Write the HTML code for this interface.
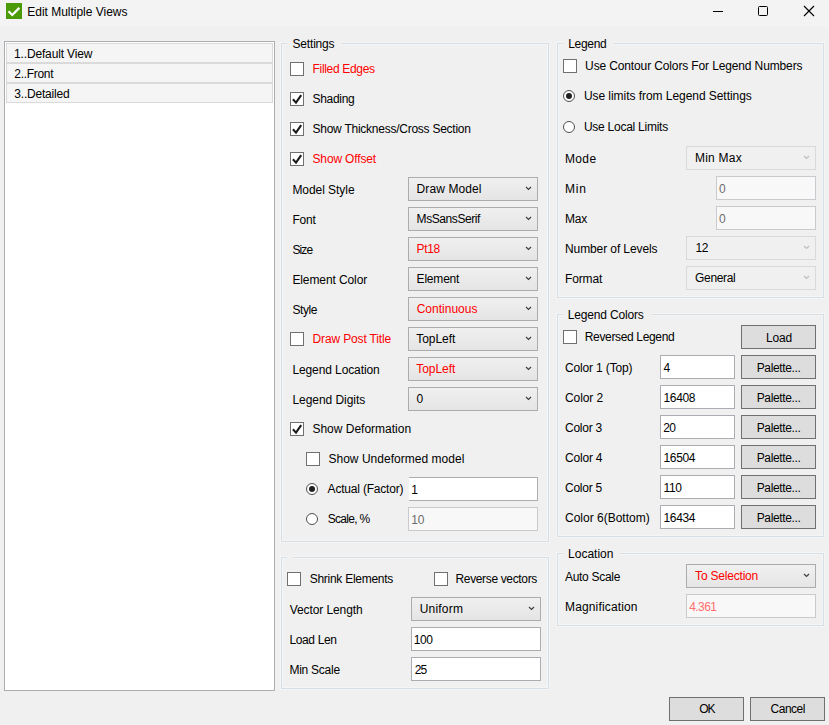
<!DOCTYPE html>
<html><head><meta charset="utf-8"><title>Edit Multiple Views</title>
<style>
html,body{margin:0;padding:0;}
body{width:829px;height:725px;background:#f0f0f0;overflow:hidden;position:relative;
 font-family:"Liberation Sans",sans-serif;font-size:12px;color:#000;}
.a{position:absolute;white-space:nowrap;}
.t{position:absolute;white-space:nowrap;line-height:16px;height:16px;}
.red{color:#ff0000;}
.gray{color:#6d6d6d;}
.lred{color:#ff6d6d;}
.gb{position:absolute;border:1px solid #d5dfe5;box-shadow:0 0 0 1px #f5f5f5, inset 0 0 0 1px #f5f5f5;box-sizing:border-box;}
.gbl{position:absolute;box-sizing:border-box;background:#f0f0f0;height:16px;}
.cb{position:absolute;width:14px;height:14px;box-sizing:border-box;border:1px solid #707070;background:#fff;}
.cb svg{position:absolute;left:0;top:0;}
.rb{position:absolute;width:12px;height:12px;box-sizing:border-box;border:1px solid #505050;background:#fff;border-radius:50%;}
.rb.on::after{content:"";position:absolute;left:2px;top:2px;width:6px;height:6px;border-radius:50%;background:#212121;}
.co{position:absolute;height:24px;box-sizing:border-box;border:1px solid #acacac;background:linear-gradient(#f0f0f0,#e5e5e5);}
.co svg{position:absolute;right:5px;top:8px;}
.co.dis{border-color:#d9d9d9;background:#f0f0f0;}
.tb{position:absolute;height:24px;box-sizing:border-box;border:1px solid #abadb3;background:#fff;}
.tb.dis{background:#f8f8f8;border-color:#c9cace;}
.bt{position:absolute;height:24px;box-sizing:border-box;border:1px solid #707070;background:#dddddd;}
.li{position:absolute;left:6px;width:267px;height:20px;box-sizing:border-box;border:1px solid #dadada;background:#f5f5f5;}
</style></head>
<body>
<div class="a" style="left:0;top:0;width:829px;height:27px;background:#f3f3f3"></div>
<svg class="a" style="left:6px;top:3px" width="16" height="16" viewBox="0 0 16 16"><rect width="16" height="16" fill="#4b9a08"/><path d="M2.5 8.3 L6.3 12 L13.3 4.9" fill="none" stroke="#fff" stroke-width="2.3"/></svg>
<div class="t " style="left:27.3px;top:4px;letter-spacing:-0.020000000000000004px">Edit Multiple Views</div>
<svg class="a" style="left:700px;top:0" width="129" height="24" viewBox="0 0 129 24"><path d="M13 11.5 H23" stroke="#000" stroke-width="1"/><rect x="58.5" y="6.5" width="9" height="9" rx="1" fill="none" stroke="#000" stroke-width="1"/><path d="M104 6 L114 16 M114 6 L104 16" stroke="#000" stroke-width="1.15"/></svg>
<div class="a" style="left:4px;top:41px;width:271px;height:650px;box-sizing:border-box;border:1px solid #abadb3;background:#fff"></div>
<div class="li" style="top:43px"></div>
<div class="t " style="left:14.0px;top:46px;letter-spacing:-0.15px">1..Default View</div>
<div class="li" style="top:63px"></div>
<div class="t " style="left:14.3px;top:66px;letter-spacing:-0.30000000000000004px">2..Front</div>
<div class="li" style="top:83px"></div>
<div class="t " style="left:14.3px;top:86px;letter-spacing:-0.2px">3..Detailed</div>
<div class="gb" style="left:281px;top:43px;width:268px;height:499px"></div>
<div class="gbl" style="left:287px;top:36px;width:55px"></div>
<div class="t " style="left:292.5px;top:36px;letter-spacing:-0.18px">Settings</div>
<div class="cb" style="left:290px;top:62px"></div>
<div class="t red" style="left:312.6px;top:61px;letter-spacing:-0.33px">Filled Edges</div>
<div class="cb" style="left:290px;top:92px"><svg width="12" height="12" viewBox="0 0 12 12"><path d="M1.9 6.3 L5 9.6 L10.2 2.2" fill="none" stroke="#1a1a1a" stroke-width="2.1"/></svg></div>
<div class="t " style="left:312.5px;top:91px;letter-spacing:-0.3px">Shading</div>
<div class="cb" style="left:290px;top:122px"><svg width="12" height="12" viewBox="0 0 12 12"><path d="M1.9 6.3 L5 9.6 L10.2 2.2" fill="none" stroke="#1a1a1a" stroke-width="2.1"/></svg></div>
<div class="t " style="left:312.5px;top:121px;letter-spacing:-0.25px">Show Thickness/Cross Section</div>
<div class="cb" style="left:290px;top:152px"><svg width="12" height="12" viewBox="0 0 12 12"><path d="M1.9 6.3 L5 9.6 L10.2 2.2" fill="none" stroke="#1a1a1a" stroke-width="2.1"/></svg></div>
<div class="t red" style="left:312.5px;top:151px;letter-spacing:-0.15px">Show Offset</div>
<div class="t " style="left:292.4px;top:182px;letter-spacing:-0.05px">Model Style</div>
<div class="co" style="left:408px;top:177px;width:130px"><svg width="7" height="5" viewBox="0 0 7 5"><path d="M1 1 L3.5 3.5 L6 1" fill="none" stroke="#404040" stroke-width="1.2"/></svg></div>
<div class="t " style="left:416.6px;top:181px;letter-spacing:0.1px">Draw Model</div>
<div class="t " style="left:292.4px;top:212px;letter-spacing:-0.2px">Font</div>
<div class="co" style="left:408px;top:207px;width:130px"><svg width="7" height="5" viewBox="0 0 7 5"><path d="M1 1 L3.5 3.5 L6 1" fill="none" stroke="#404040" stroke-width="1.2"/></svg></div>
<div class="t " style="left:416.6px;top:211px;letter-spacing:-0.42px">MsSansSerif</div>
<div class="t " style="left:292.5px;top:242px;letter-spacing:-0.9px">Size</div>
<div class="co" style="left:408px;top:237px;width:130px"><svg width="7" height="5" viewBox="0 0 7 5"><path d="M1 1 L3.5 3.5 L6 1" fill="none" stroke="#404040" stroke-width="1.2"/></svg></div>
<div class="t red" style="left:416.6px;top:241px;letter-spacing:-0.35px">Pt18</div>
<div class="t " style="left:292.4px;top:272px;letter-spacing:-0.1px">Element Color</div>
<div class="co" style="left:408px;top:267px;width:130px"><svg width="7" height="5" viewBox="0 0 7 5"><path d="M1 1 L3.5 3.5 L6 1" fill="none" stroke="#404040" stroke-width="1.2"/></svg></div>
<div class="t " style="left:416.6px;top:271px;letter-spacing:-0.2px">Element</div>
<div class="t " style="left:292.5px;top:302px;letter-spacing:-0.44999999999999996px">Style</div>
<div class="co" style="left:408px;top:297px;width:130px"><svg width="7" height="5" viewBox="0 0 7 5"><path d="M1 1 L3.5 3.5 L6 1" fill="none" stroke="#404040" stroke-width="1.2"/></svg></div>
<div class="t red" style="left:416.7px;top:301px;letter-spacing:0.0px">Continuous</div>
<div class="co" style="left:408px;top:327px;width:130px"><svg width="7" height="5" viewBox="0 0 7 5"><path d="M1 1 L3.5 3.5 L6 1" fill="none" stroke="#404040" stroke-width="1.2"/></svg></div>
<div class="t " style="left:416.2px;top:331px;letter-spacing:-0.05000000000000002px">TopLeft</div>
<div class="t " style="left:292.4px;top:362px;letter-spacing:-0.1px">Legend Location</div>
<div class="co" style="left:408px;top:357px;width:130px"><svg width="7" height="5" viewBox="0 0 7 5"><path d="M1 1 L3.5 3.5 L6 1" fill="none" stroke="#404040" stroke-width="1.2"/></svg></div>
<div class="t red" style="left:416.2px;top:361px;letter-spacing:-0.05000000000000002px">TopLeft</div>
<div class="t " style="left:292.4px;top:392px;letter-spacing:-0.04px">Legend Digits</div>
<div class="co" style="left:408px;top:387px;width:130px"><svg width="7" height="5" viewBox="0 0 7 5"><path d="M1 1 L3.5 3.5 L6 1" fill="none" stroke="#404040" stroke-width="1.2"/></svg></div>
<div class="t " style="left:416.5px;top:391px;letter-spacing:-0.1px">0</div>
<div class="cb" style="left:290px;top:332px"></div>
<div class="t red" style="left:312.6px;top:331px;letter-spacing:-0.15px">Draw Post Title</div>
<div class="cb" style="left:290px;top:422px"><svg width="12" height="12" viewBox="0 0 12 12"><path d="M1.9 6.3 L5 9.6 L10.2 2.2" fill="none" stroke="#1a1a1a" stroke-width="2.1"/></svg></div>
<div class="t " style="left:312.4px;top:421px;letter-spacing:0.0px">Show Deformation</div>
<div class="cb" style="left:306px;top:452px"></div>
<div class="t " style="left:328.4px;top:451px;letter-spacing:0.03px">Show Undeformed model</div>
<div class="rb on" style="left:306px;top:483px"></div>
<div class="t " style="left:327.6px;top:481px;letter-spacing:-0.2px">Actual (Factor)</div>
<div class="tb" style="left:408px;top:477px;width:130px"></div>
<div class="t " style="left:411.2px;top:482px;letter-spacing:-0.1px">1</div>
<div class="a" style="left:408px;top:477px;width:1px;height:24px;background:#f0f0f0"></div>
<div class="rb" style="left:306px;top:513px"></div>
<div class="t " style="left:327.7px;top:511px;letter-spacing:-0.7px">Scale, %</div>
<div class="tb dis" style="left:408px;top:507px;width:130px"></div>
<div class="t gray" style="left:411.2px;top:512px;letter-spacing:-0.1px">10</div>
<div class="gb" style="left:281px;top:557px;width:268px;height:132px"></div>
<div class="gbl" style="left:287px;top:550px;width:6px"></div>
<div class="cb" style="left:287px;top:572px"></div>
<div class="t " style="left:309.7px;top:571px;letter-spacing:-0.27px">Shrink Elements</div>
<div class="cb" style="left:434px;top:572px"></div>
<div class="t " style="left:455.5px;top:571px;letter-spacing:-0.35px">Reverse vectors</div>
<div class="t " style="left:289.8px;top:602px;letter-spacing:-0.09999999999999999px">Vector Length</div>
<div class="co" style="left:411px;top:597px;width:130px"><svg width="7" height="5" viewBox="0 0 7 5"><path d="M1 1 L3.5 3.5 L6 1" fill="none" stroke="#404040" stroke-width="1.2"/></svg></div>
<div class="t " style="left:419.7px;top:601px;letter-spacing:0.2px">Uniform</div>
<div class="t " style="left:289.4px;top:632px;letter-spacing:-0.35px">Load Len</div>
<div class="tb" style="left:411px;top:627px;width:130px"></div>
<div class="t " style="left:413.7px;top:632px;letter-spacing:-0.35px">100</div>
<div class="t " style="left:289.4px;top:662px;letter-spacing:-0.25px">Min Scale</div>
<div class="tb" style="left:411px;top:657px;width:130px"></div>
<div class="t " style="left:414.7px;top:662px;letter-spacing:-0.9px">25</div>
<div class="gb" style="left:557px;top:43px;width:267px;height:255px"></div>
<div class="gbl" style="left:563px;top:36px;width:51px"></div>
<div class="t " style="left:568.2px;top:36px;letter-spacing:-0.3px">Legend</div>
<div class="cb" style="left:563px;top:59px"></div>
<div class="t " style="left:585.1px;top:58px;letter-spacing:-0.13px">Use Contour Colors For Legend Numbers</div>
<div class="rb on" style="left:563px;top:90px"></div>
<div class="t " style="left:583.9px;top:88px;letter-spacing:-0.05px">Use limits from Legend Settings</div>
<div class="rb" style="left:563px;top:121px"></div>
<div class="t " style="left:583.9px;top:119px;letter-spacing:-0.25px">Use Local Limits</div>
<div class="t " style="left:565.0px;top:151px;letter-spacing:0.35px">Mode</div>
<div class="co dis" style="left:686px;top:146px;width:130px"><svg width="7" height="5" viewBox="0 0 7 5"><path d="M1 1 L3.5 3.5 L6 1" fill="none" stroke="#bfbfbf" stroke-width="1.2"/></svg></div>
<div class="t " style="left:694.9px;top:150px;letter-spacing:0.25px">Min Max</div>
<div class="t " style="left:565.0px;top:181px;letter-spacing:0.75px">Min</div>
<div class="tb dis" style="left:716px;top:176px;width:100px"></div>
<div class="t gray" style="left:719px;top:181px;letter-spacing:-0.1px">0</div>
<div class="t " style="left:565.0px;top:211px;letter-spacing:-0.25px">Max</div>
<div class="tb dis" style="left:716px;top:206px;width:100px"></div>
<div class="t gray" style="left:719px;top:211px;letter-spacing:-0.1px">0</div>
<div class="t " style="left:565.0px;top:241px;letter-spacing:-0.1px">Number of Levels</div>
<div class="co dis" style="left:686px;top:236px;width:130px"><svg width="7" height="5" viewBox="0 0 7 5"><path d="M1 1 L3.5 3.5 L6 1" fill="none" stroke="#bfbfbf" stroke-width="1.2"/></svg></div>
<div class="t " style="left:695.5px;top:240px;letter-spacing:-0.4px">12</div>
<div class="t " style="left:565.0px;top:271px;letter-spacing:-0.15px">Format</div>
<div class="co dis" style="left:686px;top:266px;width:130px"><svg width="7" height="5" viewBox="0 0 7 5"><path d="M1 1 L3.5 3.5 L6 1" fill="none" stroke="#bfbfbf" stroke-width="1.2"/></svg></div>
<div class="t " style="left:695.1px;top:270px;letter-spacing:-0.35px">General</div>
<div class="gb" style="left:557px;top:314px;width:267px;height:223px"></div>
<div class="gbl" style="left:563px;top:307px;width:88px"></div>
<div class="t " style="left:567.7px;top:307px;letter-spacing:-0.16px">Legend Colors</div>
<div class="cb" style="left:563px;top:330px"></div>
<div class="t " style="left:584.8px;top:329px;letter-spacing:-0.35px">Reversed Legend</div>
<div class="bt" style="left:741px;top:325px;width:75px"></div>
<div class="t " style="left:765.9px;top:330px;letter-spacing:-0.1px">Load</div>
<div class="t " style="left:565.0px;top:360px;letter-spacing:-0.15px">Color 1 (Top)</div>
<div class="tb" style="left:660px;top:355px;width:75px"></div>
<div class="t " style="left:663.4px;top:360px;letter-spacing:0.0px">4</div>
<div class="bt" style="left:741px;top:355px;width:75px"></div>
<div class="t " style="left:756.7px;top:360px;letter-spacing:-0.35px">Palette...</div>
<div class="t " style="left:565.0px;top:390px;letter-spacing:-0.1px">Color 2</div>
<div class="tb" style="left:660px;top:385px;width:75px"></div>
<div class="t " style="left:663.6px;top:390px;letter-spacing:-0.4px">16408</div>
<div class="bt" style="left:741px;top:385px;width:75px"></div>
<div class="t " style="left:756.7px;top:390px;letter-spacing:-0.35px">Palette...</div>
<div class="t " style="left:565.0px;top:420px;letter-spacing:-0.25px">Color 3</div>
<div class="tb" style="left:660px;top:415px;width:75px"></div>
<div class="t " style="left:663.3px;top:420px;letter-spacing:-0.8px">20</div>
<div class="bt" style="left:741px;top:415px;width:75px"></div>
<div class="t " style="left:756.7px;top:420px;letter-spacing:-0.35px">Palette...</div>
<div class="t " style="left:565.0px;top:450px;letter-spacing:-0.2px">Color 4</div>
<div class="tb" style="left:660px;top:445px;width:75px"></div>
<div class="t " style="left:663.6px;top:450px;letter-spacing:-0.4px">16504</div>
<div class="bt" style="left:741px;top:445px;width:75px"></div>
<div class="t " style="left:756.7px;top:450px;letter-spacing:-0.35px">Palette...</div>
<div class="t " style="left:565.0px;top:480px;letter-spacing:-0.25px">Color 5</div>
<div class="tb" style="left:660px;top:475px;width:75px"></div>
<div class="t " style="left:663.6px;top:480px;letter-spacing:-0.45px">110</div>
<div class="bt" style="left:741px;top:475px;width:75px"></div>
<div class="t " style="left:756.7px;top:480px;letter-spacing:-0.35px">Palette...</div>
<div class="t " style="left:565.0px;top:510px;letter-spacing:0.0px">Color 6(Bottom)</div>
<div class="tb" style="left:660px;top:505px;width:75px"></div>
<div class="t " style="left:663.6px;top:510px;letter-spacing:-0.4px">16434</div>
<div class="bt" style="left:741px;top:505px;width:75px"></div>
<div class="t " style="left:756.7px;top:510px;letter-spacing:-0.35px">Palette...</div>
<div class="gb" style="left:557px;top:553px;width:267px;height:73px"></div>
<div class="gbl" style="left:563px;top:546px;width:57px"></div>
<div class="t " style="left:568.1px;top:546px;letter-spacing:0.0px">Location</div>
<div class="t " style="left:565.0px;top:569px;letter-spacing:-0.3px">Auto Scale</div>
<div class="co" style="left:686px;top:564px;width:130px"><svg width="7" height="5" viewBox="0 0 7 5"><path d="M1 1 L3.5 3.5 L6 1" fill="none" stroke="#404040" stroke-width="1.2"/></svg></div>
<div class="t red" style="left:695.1px;top:568px;letter-spacing:-0.2px">To Selection</div>
<div class="t " style="left:565.0px;top:599px;letter-spacing:0.15000000000000002px">Magnification</div>
<div class="tb dis" style="left:686px;top:594px;width:130px"></div>
<div class="t lred" style="left:689.2px;top:599px;letter-spacing:-0.55px">4.361</div>
<div class="bt" style="left:669px;top:697px;width:75px"></div>
<div class="t " style="left:699.2px;top:701px;letter-spacing:-0.9px">OK</div>
<div class="bt" style="left:750px;top:697px;width:75px"></div>
<div class="t " style="left:770.6px;top:701px;letter-spacing:-0.5px">Cancel</div>
</body></html>
